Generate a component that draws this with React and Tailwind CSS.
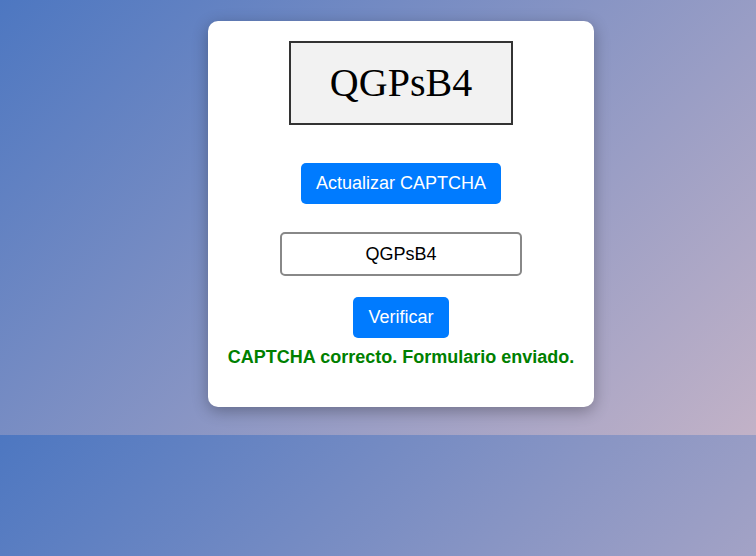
import React, { useState } from "react";

export default function App() {
  const [code] = useState("QGPsB4");
  const [value, setValue] = useState("QGPsB4");

  return (
    <div
      className="h-[556px] w-full overflow-hidden bg-[linear-gradient(135deg,#4d77c1,#c2b2c7)] bg-repeat [background-size:100%_435px] pt-[21px]"
      style={{ fontFamily: '"Liberation Sans", Arial, sans-serif' }}
    >
      <div className="ml-[208px] flex w-[386px] flex-col items-center rounded-[10px] bg-white px-5 pt-5 pb-[40px] shadow-[0_4px_16px_rgba(0,0,0,0.3)]">
        <div
          className="flex h-[84px] w-[224px] items-center justify-center border-2 border-[#333] bg-[#f2f2f2] text-[40px] text-black"
          style={{ fontFamily: '"Liberation Serif", "Times New Roman", serif' }}
        >
          {code}
        </div>

        <button className="mt-[38px] h-[41px] w-[200px] rounded-[5px] bg-[#007bff] text-[18px] text-white">
          Actualizar CAPTCHA
        </button>

        <input
          value={value}
          onChange={(e) => setValue(e.target.value)}
          className="mt-[28px] h-[44px] w-[242px] rounded-[5px] border-2 border-[#888] text-center text-[18px] text-black outline-none"
        />

        <button className="mt-[21px] h-[41px] w-[96px] rounded-[5px] bg-[#007bff] text-[18px] text-white">
          Verificar
        </button>

        <p className="mt-[9px] text-[18px] font-bold leading-[20px] text-[#008000] whitespace-nowrap">
          CAPTCHA correcto. Formulario enviado.
        </p>
      </div>
    </div>
  );
}
